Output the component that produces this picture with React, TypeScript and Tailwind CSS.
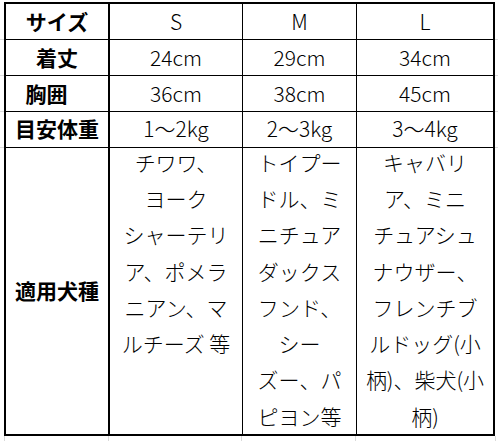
import React from "react"

const font = "font-['Noto_Sans_CJK_JP',sans-serif]"

const rows = [
  { label: "サイズ", values: ["S", "M", "L"] },
  { label: "着丈", values: ["24cm", "29cm", "34cm"] },
  { label: "胸囲　", values: ["36cm", "38cm", "45cm"] },
  { label: "目安体重", values: ["1〜2kg", "2〜3kg", "3〜4kg"] },
]

const breeds = [
  ["チワワ、", "ヨーク", "シャーテリ", "ア、ポメラ", "ニアン、マ", "ルチーズ 等"],
  ["トイプー", "ドル、ミ", "ニチュア", "ダックス", "フンド、", "シー", "ズー、パ", "ピヨン等"],
  ["キャバリ", "ア、ミニ", "チュアシュ", "ナウザー、", "フレンチブ", "ルドッグ(小", "柄)、柴犬(小", "柄)"],
]

const colWidths = ["w-[133px] border-r", "w-[114px] border-r", "w-[136px]"]

// light excel gridlines around the table
function SideMargin({ className }: { className: string }) {
  return (
    <div className={`flex flex-col ${className}`}>
      <div className="h-[38px] border-b border-[#dadada]" />
      <div className="h-[36px] border-b border-[#dadada]" />
      <div className="h-[36px] border-b border-[#dadada]" />
      <div className="h-[36px] border-b border-[#dadada]" />
      <div className="flex-1" />
    </div>
  )
}

export default function App() {
  return (
    <div className={`flex h-[441px] w-[498px] flex-col bg-white text-black ${font}`}>
      <div className="h-[2px]" />
      <div className="flex">
        <SideMargin className="w-[4px]" />

        <div className="box-border flex h-[434px] w-[491px] flex-col border-2 border-black">
          {rows.map((row) => (
            <div key={row.label} className="flex h-[36px] border-b border-black">
              <div className="flex w-[104px] items-center justify-center border-r-2 border-black text-[21px] font-bold">
                {row.label}
              </div>
              {row.values.map((v, i) => (
                <div
                  key={v}
                  className={`flex items-center justify-center border-black text-[21px] font-light ${colWidths[i]}`}
                >
                  {v}
                </div>
              ))}
            </div>
          ))}

          <div className="flex flex-1">
            <div className="flex w-[104px] items-center justify-center border-r-2 border-black text-[21px] font-bold">
              適用犬種
            </div>
            {breeds.map((lines, i) => (
              <div key={i} className={`border-black ${colWidths[i]}`}>
                <div className="-mt-[4px] flex flex-col items-center text-[21px] font-light leading-[36.3px]">
                  {lines.map((line) => (
                    <span key={line} className="whitespace-pre">
                      {line}
                    </span>
                  ))}
                </div>
              </div>
            ))}
          </div>
        </div>

        <SideMargin className="w-[3px]" />
      </div>

      <div className="flex h-[5px]">
        <div className="w-[5px] border-r border-[#dadada]" />
        <div className="w-[104px] border-r border-[#dadada]" />
        <div className="w-[133px] border-r border-[#dadada]" />
        <div className="w-[114px] border-r border-[#dadada]" />
        <div className="w-[140px] border-r border-[#dadada]" />
      </div>
    </div>
  )
}
